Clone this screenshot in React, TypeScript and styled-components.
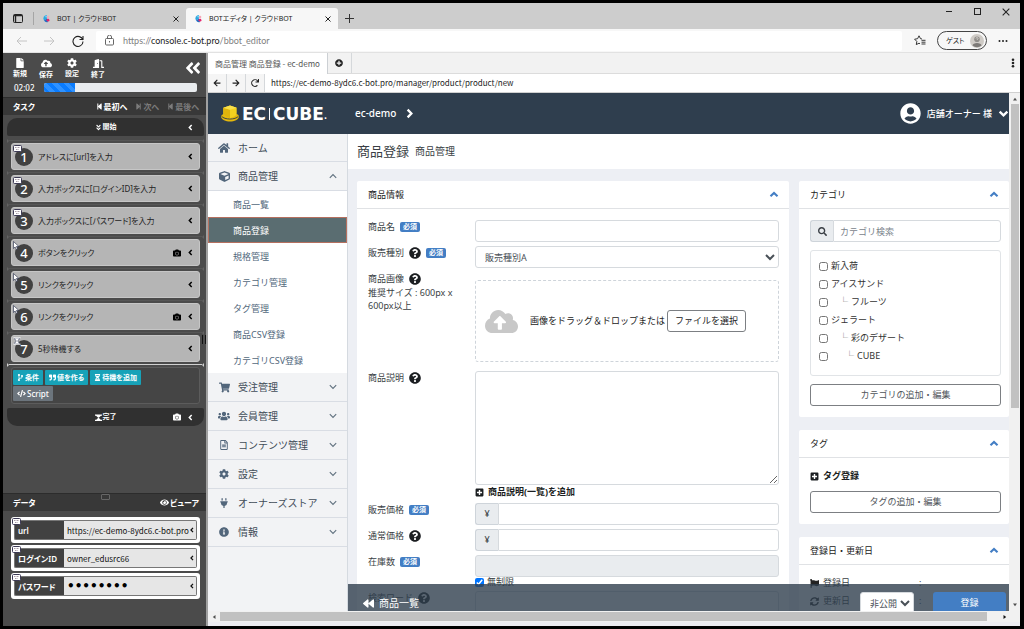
import React from "react";
import styled, { createGlobalStyle, css } from "styled-components";
import {
  FaFile, FaCloudUploadAlt, FaCog, FaDoorOpen, FaAngleDoubleLeft, FaStepBackward, FaStepForward,
  FaCamera, FaCodeBranch, FaQuoteRight,
  FaHourglassHalf, FaCode, FaEye, FaHome, FaCube, FaShoppingCart, FaUsers, FaRegFileAlt, FaPlug,
  FaInfoCircle, FaQuestionCircle, FaPlusSquare, FaBackward, FaFlag, FaSyncAlt, FaSearch,
  FaUserCircle, FaArrowLeft, FaArrowRight, FaRedo, FaPlusCircle, FaAngleDoubleDown,
} from "react-icons/fa";

const Global = createGlobalStyle`
  *, *::before, *::after { box-sizing: border-box; }
  body {
    margin: 0;
    background: #000;
    color: #3a3f45;
    font: 9px/14px "Noto Sans", "Noto Sans CJK JP", sans-serif;
  }
  button, input, select, textarea { font: inherit; color: inherit; margin: 0; padding: 0; }
  button { border: 0; background: none; cursor: pointer; }
  a { color: inherit; text-decoration: none; }
  ul, ol { margin: 0; padding: 0; list-style: none; }
  h1, h2 { margin: 0; font: inherit; }
  svg { display: block; flex: none; }
`;

/* ---------- browser window ---------- */

const Window = styled.div`
  height: 100vh;
  border: 3px solid #000;
  border-right-width: 4px;
  display: flex;
  flex-direction: column;
  overflow: hidden;
`;

const TabStrip = styled.div`
  flex: none;
  display: flex;
  align-items: flex-end;
  height: 26px;
  background: #cdcdcd;
`;

const WindowMenu = styled.button`
  width: 31px;
  height: 13px;
  margin-bottom: 4px;
  display: grid;
  place-items: center;
  border-right: 1px solid #a5a5a5;
  color: #222;
`;

const BrowserTab = styled.div<{ $active?: boolean }>`
  width: 152px;
  height: 21px;
  padding: 0 7px 0 8px;
  display: flex;
  align-items: center;
  gap: 6px;
  border-radius: 3px 3px 0 0;
  background: ${(p) => (p.$active ? "#f7f7f7" : "transparent")};
  color: #222;
  font-size: 7px;
  font-feature-settings: "palt";
  & > span { flex: 1; white-space: nowrap; }
`;

const PlainButton = styled.button`
  display: grid;
  place-items: center;
  color: inherit;
`;

const NewTab = styled(PlainButton)`
  width: 22px;
  height: 21px;
  color: #333;
`;

const WindowControls = styled.div`
  margin-left: auto;
  align-self: flex-start;
  display: flex;
  gap: 19px;
  padding: 3px 10px 0 0;
  color: #222;
`;

const AddressRow = styled.div`
  flex: none;
  display: flex;
  align-items: center;
  height: 24px;
  background: #f7f7f7;
  border-bottom: 1px solid #e2e2e2;
`;

const NavButtons = styled.div`
  display: flex;
  gap: 17px;
  width: 93px;
  padding-left: 13px;
  color: #c4c4c4;
  & > :last-child { color: #222; }
`;

const AddressBox = styled.div`
  flex: 1;
  display: flex;
  align-items: center;
  gap: 9px;
  height: 20px;
  padding-left: 9px;
  background: #fff;
  border-radius: 2px;
  color: #808080;
  font-family: Lato, sans-serif;
  & b { font-weight: 400; color: #222; }
`;

const BrowserTools = styled.div`
  display: flex;
  align-items: center;
  gap: 11px;
  padding: 0 12px;
  color: #222;
`;

const Guest = styled.button`
  display: flex;
  align-items: center;
  justify-content: space-between;
  width: 50px;
  height: 19px;
  padding: 0 2px 0 8px;
  border: 1px solid #444;
  border-radius: 10px;
  font-size: 7px;
  font-feature-settings: "palt";
  white-space: nowrap;
`;

/* ---------- bot editor panel ---------- */

const Workspace = styled.div`
  flex: 1;
  min-height: 0;
  display: flex;
`;

const Editor = styled.aside`
  flex: none;
  position: relative;
  display: flex;
  flex-direction: column;
  width: 205px;
  background: #4b4b4b;
  border-right: 2px solid #a0a0a0;
  color: #fff;
  font-size: 8px;
  line-height: 10px;
  font-feature-settings: "palt";
`;

const EditorTools = styled.div`
  display: flex;
  align-items: flex-start;
  height: 28px;
  padding: 5px 4px 0;
`;

const ToolButton = styled.button`
  width: 26px;
  display: flex;
  flex-direction: column;
  align-items: center;
  gap: 1px;
  font-size: 7px;
  font-weight: 700;
  line-height: 10px;
`;

const Collapse = styled.button`
  margin: 1px 0 0 auto;
`;

const ProgressRow = styled.div`
  display: flex;
  align-items: center;
  gap: 10px;
  height: 16px;
  padding: 0 9px 3px 11px;
  font-weight: 500;
`;

const Progress = styled.div`
  flex: 1;
  height: 9px;
  background: #e9ecef;
  border-radius: 2px;
  overflow: hidden;
`;

const ProgressFill = styled.div`
  height: 100%;
  background: repeating-linear-gradient(45deg, #0a7cff 0 4px, #2f92ff 4px 8px);
`;

const SectionBar = styled.div`
  flex: none;
  position: relative;
  display: flex;
  align-items: center;
  gap: 8px;
  height: 18px;
  padding: 0 7px 0 10px;
  background: #383838;
  border-top: 1px solid #2c2c2c;
  font-weight: 600;
  & > h2 { flex: 1; }
`;

const StepButton = styled.button<{ $dim?: boolean }>`
  display: flex;
  align-items: center;
  gap: 1px;
  font-weight: 700;
  color: ${(p) => (p.$dim ? "#7c7c7c" : "#fff")};
`;

const TaskArea = styled.div`
  flex: 1;
  padding: 3px 2px 0 4px;
`;

const Terminal = styled.div<{ $end?: boolean }>`
  display: grid;
  grid-template-columns: 1fr auto 1fr;
  align-items: center;
  height: 18px;
  padding: 0 10px;
  background: #303030;
  border-radius: ${(p) => (p.$end ? "2px 2px 10px 10px" : "10px 10px 2px 2px")};
  font-size: 7px;
  font-weight: 700;
  & > span { grid-column: 2; display: flex; align-items: center; gap: 1px; }
  & > div { display: flex; justify-content: flex-end; align-items: center; gap: 6px; }
`;

const Connector = styled.div<{ $bright?: boolean; $first?: boolean }>`
  --line: ${(p) => (p.$bright ? "#d0d0d0" : "#626262")};
  height: 5px;
  margin-top: ${(p) => (p.$first ? 2 : 0)}px;
  display: flex;
  align-items: center;
  &::before, &::after {
    content: "";
    border: 2px solid transparent;
  }
  &::before { border-left: 2px solid var(--line); border-right: 0; }
  &::after { border-right: 2px solid var(--line); border-left: 0; }
  & > i { flex: 1; height: 1px; background: ${(p) => (p.$bright ? "#d0d0d0" : "#565656")}; }
`;

const TaskCard = styled.li`
  position: relative;
  display: flex;
  align-items: center;
  height: 27px;
  margin: 0 4px;
  padding: 0 5px 0 3px;
  background: #b5b5b5;
  border: 1px solid #c6c6c6;
  border-radius: 3px;
  color: #222;
  white-space: nowrap;
  & > span { flex: 1; }
  & > div { display: flex; align-items: center; gap: 6px; color: #000; }
`;

const StepNumber = styled.b`
  width: 18px;
  height: 18px;
  margin-right: 5px;
  border-radius: 50%;
  background: #414141;
  color: #fff;
  font-size: 13px;
  font-weight: 500;
  line-height: 18px;
  text-align: center;
`;

const Badge = styled.span`
  position: absolute;
  top: 1px;
  left: 1px;
`;

const ActionBox = styled.div`
  display: flex;
  flex-wrap: wrap;
  gap: 1px 2px;
  height: 37px;
  margin: 0 4px 4px;
  padding: 2px 30px 2px 1px;
  border: 1px solid #5c5c5c;
  border-radius: 3px;
  background: #454545;
`;

const ActionButton = styled.button<{ $plain?: boolean }>`
  display: flex;
  align-items: center;
  gap: 1px;
  height: 15px;
  padding: 0 4px;
  border-radius: 1px;
  background: ${(p) => (p.$plain ? "#6c757d" : "#17a2b8")};
  font-size: ${(p) => (p.$plain ? "8px" : "7px")};
  font-weight: ${(p) => (p.$plain ? 500 : 700)};
`;

const DataList = styled.ul`
  display: flex;
  flex-direction: column;
  gap: 2px;
  height: 115px;
  padding: 6px 6px 0 8px;
`;

const DataRow = styled.li`
  position: relative;
  display: flex;
  height: 26px;
  padding: 3px;
  background: #fff;
  border-radius: 3px;
`;

const DataName = styled.label`
  width: 50px;
  padding: 0 3px;
  background: #414141;
  border: 1px solid #777;
  border-right: 0;
  border-radius: 2px 0 0 2px;
  line-height: 20px;
  font-weight: 600;
  white-space: nowrap;
`;

const DataValue = styled.div`
  flex: 1;
  min-width: 0;
  display: flex;
  align-items: center;
  padding-right: 1px;
  background: #e6e6e6;
  border: 1px solid #777;
  border-left: 0;
  border-radius: 0 2px 2px 0;
  color: #111;
  & > input {
    flex: 1;
    min-width: 0;
    height: 18px;
    padding-left: 3px;
    border: 0;
    outline: 0;
    background: none;
    font-family: "Noto Sans CJK JP", sans-serif;
  }
  & > input[type="password"] { font: 700 12px "DejaVu Sans", sans-serif; color: #000; }
`;

const SideGrip = styled.span`
  position: absolute;
  right: 0;
  top: 282px;
  width: 4px;
  height: 9px;
  border: solid #111;
  border-width: 0 1px;
`;

const TopGrip = styled.span`
  position: absolute;
  top: 0;
  left: 98px;
  width: 9px;
  height: 6px;
  border: 1px solid #666;
  border-radius: 1px;
`;

/* ---------- embedded page ---------- */

const Viewer = styled.section`
  flex: 1;
  min-width: 0;
  display: flex;
  flex-direction: column;
  background: #fff;
`;

const ViewerTabs = styled.div`
  flex: none;
  display: flex;
  height: 21px;
  background: #f2f2f2;
  border-bottom: 1px solid #dcdcdc;
  font-family: "Noto Sans CJK JP", sans-serif;
  font-size: 8px;
`;

const ViewerTab = styled.div`
  height: 21px;
  padding: 0 7px;
  background: #fff;
  border-right: 1px solid #ccd0d4;
  line-height: 22px;
  color: #555;
  white-space: nowrap;
`;

const ViewerAdd = styled(PlainButton)`
  width: 24px;
  border-right: 1px solid #d5d8db;
  color: #222;
`;

const ViewerMenu = styled(PlainButton)`
  width: 14px;
  margin-left: auto;
  color: #222;
`;

const ViewerAddress = styled.div`
  flex: none;
  display: flex;
  height: 19px;
  border-bottom: 1px solid #d0d0d0;
  color: #222;
  font-family: "Noto Sans CJK JP", sans-serif;
  font-size: 8px;
  line-height: 18px;
  & > button { width: 19px; border-right: 1px solid #d5d8db; background: #f5f5f5; color: #222; }
  & > span { padding-left: 6px; }
`;

const Frame = styled.div`
  flex: 1;
  min-height: 0;
  display: grid;
  grid-template-columns: minmax(0, 1fr) 11px;
  grid-template-rows: minmax(0, 1fr) 11px;
  border-bottom: 4px solid #ededf2;
`;

const Page = styled.div`
  display: flex;
  flex-direction: column;
  min-height: 0;
  overflow: hidden;
`;

const VerticalBar = styled.div`
  display: flex;
  flex-direction: column;
  align-items: center;
  justify-content: space-between;
  padding: 4px 1px;
  background: #f1f1f1;
  color: #505050;
  & > i { flex: 1; width: 8px; margin-top: 3px; background: linear-gradient(#c1c1c1 61%, transparent 61%); }
`;

const HorizontalBar = styled.div`
  grid-column: 1 / -1;
  display: flex;
  align-items: center;
  padding: 0 13px 0 4px;
  background: #f1f1f1;
  color: #505050;
  & > i { flex: 1; height: 9px; margin: 0 16px 0 4px; background: #c1c1c1; }
`;

const PageHeader = styled.header`
  flex: none;
  display: flex;
  align-items: center;
  height: 41px;
  padding-left: 12px;
  background: #2f3e4e;
  color: #fff;
  font-size: 10px;
`;

const Logo = styled.a`
  display: flex;
  align-items: center;
  width: 135px;
  font: 700 17px/20px "DejaVu Sans", sans-serif;
  & > svg { margin-right: 2px; }
  & > i { width: 1px; height: 12px; margin: 0 3px; background: #fff; }
  & > small { font-size: 8px; align-self: flex-end; line-height: 14px; }
`;

const ShopLink = styled.a`
  display: flex;
  align-items: center;
  gap: 8px;
  padding-bottom: 1px;
  font-weight: 500;
`;

const UserMenu = styled.button`
  display: flex;
  align-items: center;
  gap: 6px;
  margin-left: auto;
  font-size: 9px;
  font-weight: 500;
`;

const PageBody = styled.div`
  flex: 1;
  min-height: 0;
  display: flex;
`;

const SideNav = styled.nav`
  flex: none;
  width: 140px;
  background: #f2f3f5;
  border-right: 1px solid #d5dae0;
`;

const NavItem = styled.a`
  display: grid;
  grid-template-columns: 12px 1fr 8px;
  align-items: center;
  gap: 8px;
  height: 29px;
  padding: 0 10px;
  border-bottom: 1px solid #d9dde4;
  color: #414c58;
  font-size: 10px;
  &:first-child { height: 28px; }
  & > svg:first-child { color: #52667b; justify-self: center; }
  & > svg:last-child { color: #60717f; }
`;

const SubItem = styled.a<{ $active?: boolean }>`
  display: block;
  height: 26px;
  padding-left: 24px;
  border: 1px solid transparent;
  background: #fff;
  color: #52687c;
  line-height: 25px;
  ${(p) => p.$active && css`
    background: #5a6d71;
    border-color: #b5705f;
    color: #fff;
  `}
`;

const Content = styled.main`
  flex: 1;
  min-width: 0;
  position: relative;
  overflow: hidden;
  background: #edeff4;
`;

const TitleBar = styled.div`
  display: flex;
  align-items: center;
  gap: 6px;
  height: 35px;
  padding: 0 0 2px 9px;
  background: #fff;
  font-size: 10px;
  & > h1 { font-size: 13px; }
`;

const Columns = styled.div`
  display: grid;
  grid-template-columns: minmax(0, 1fr) 210px;
  gap: 10px;
  align-items: start;
  padding: 12px 0 0 9px;
`;

const SideColumn = styled.div`
  display: flex;
  flex-direction: column;
  gap: 13px;
`;

const CardBox = styled.section`
  background: #fff;
  border-radius: 2px;
`;

const CardHead = styled.div`
  display: flex;
  align-items: center;
  justify-content: space-between;
  height: 28px;
  padding: 0 8px 0 11px;
  border-bottom: 1px solid #e0e2e5;
  color: #222;
  & > button { padding: 0 2px; color: #437ec4; }
`;

const CardBody = styled.div<{ $gap: number }>`
  display: flex;
  flex-direction: column;
  gap: ${(p) => p.$gap}px;
  padding: 11px 10px 11px 11px;
`;

const SideBody = styled(CardBody)`
  padding-right: 8px;
`;

const FieldRow = styled.div`
  display: grid;
  grid-template-columns: 107px minmax(0, 1fr);
`;

const FieldLabel = styled.label`
  display: flex;
  flex-wrap: wrap;
  align-items: center;
  align-self: start;
  gap: 0 5px;
  white-space: nowrap;
`;

const FieldNote = styled.span`
  width: 100%;
  white-space: pre-line;
  line-height: 13px;
`;

const Required = styled.span`
  height: 10px;
  padding: 0 3px;
  border-radius: 2px;
  background: #437ec4;
  color: #fff;
  font-size: 7px;
  font-weight: 700;
  line-height: 10px;
`;

const box = css`
  border: 1px solid #d6dade;
  border-radius: 3px;
  background: #fff;
`;

const TextInput = styled.input`
  ${box}
  width: 100%;
  height: 22px;
  padding: 0 6px;
  &:disabled { background: #e9ecef; }
  &::placeholder { color: #7a838b; opacity: 1; }
`;

const SelectInput = styled.select`
  ${box}
  width: 100%;
  height: 22px;
  padding: 0 0 0 5px;
  color: #495057;
`;

const TextArea = styled.textarea`
  ${box}
  display: block;
  width: 100%;
  height: 114px;
  resize: vertical;
`;

const DropZone = styled.div`
  display: flex;
  align-items: center;
  height: 82px;
  margin: 8px 0 5px;
  padding-left: 9px;
  border: 1px dashed #ced4da;
  border-radius: 3px;
  color: #222;
  white-space: nowrap;
  & > svg { color: #c8c8c8; margin-right: 12px; }
`;

const OutlineButton = styled.button`
  height: 22px;
  padding: 0 7px;
  border: 1px solid #7c7f83;
  border-radius: 3px;
  background: #fff;
  color: #50555a;
`;

const FileButton = styled(OutlineButton)`
  margin-left: 2px;
  color: #222;
`;

const AddLink = styled.a`
  display: flex;
  align-items: center;
  gap: 4px;
  color: #1b1e21;
  font-weight: 700;
`;

const InputGroup = styled.div`
  display: flex;
  & > input { border-radius: 0 3px 3px 0; min-width: 0; }
`;

const Addon = styled.span`
  flex: none;
  display: grid;
  place-items: center;
  width: 23px;
  border: 1px solid #ced4da;
  border-right: 0;
  border-radius: 3px 0 0 3px;
  background: #e9ecef;
`;

const Tick = styled.input`
  width: 9px;
  height: 9px;
`;

const CheckLabel = styled.label<{ $short?: boolean }>`
  display: flex;
  align-items: center;
  gap: 3px;
  height: ${(p) => (p.$short ? "10px" : "18px")};
  white-space: pre;
`;

const Tree = styled.div`
  height: 126px;
  padding: 6px 8px;
  border: 1px solid #e1e4e7;
  border-radius: 3px;
  color: #333;
`;

const Branch = styled.span<{ $depth: number }>`
  display: inline-flex;
  align-items: center;
  gap: 3px;
  padding-left: ${(p) => p.$depth * 6 + 2}px;
  & > i { color: #777; font-style: normal; }
`;

const DateRow = styled.div`
  display: grid;
  grid-template-columns: 9px 92px 1fr;
  align-items: center;
  gap: 4px;
`;

const ActionBar = styled.div`
  position: absolute;
  left: 0;
  right: 0;
  bottom: 0;
  display: flex;
  align-items: flex-start;
  height: 27px;
  padding: 8px 3px 0 15px;
  overflow: hidden;
  background: rgba(47, 62, 78, 0.8);
  color: #fff;
  font-size: 10px;
`;

const BackLink = styled.a`
  flex: 1;
  display: flex;
  align-items: center;
  gap: 5px;
  height: 22px;
`;

const StatusSelect = styled(SelectInput)`
  width: 54px;
  font-size: 9px;
  margin-right: 19px;
`;

const SubmitButton = styled.button`
  width: 73px;
  height: 22px;
  border-radius: 3px 3px 0 0;
  background: #437ec4;
  font-size: 9px;
`;

/* ---------- drawings ---------- */

type Kind = "keyboard" | "pointer" | "wait";

const KindMark = ({ kind }: { kind: Kind }) => {
  if (kind === "keyboard")
    return (
      <svg width="9" height="7" viewBox="0 0 9 7">
        <rect x=".5" y=".5" width="8" height="6" rx="1" fill="#fff" stroke="#3d3a55" />
        <path d="M2 2.500h5M3 4.500h3" stroke="#a79aa5" strokeDasharray="1 .5" />
      </svg>
    );
  if (kind === "pointer")
    return (
      <svg width="7" height="9" viewBox="0 0 7 9">
        <path d="M.5.5v7l1.600-1.500 1.200 2.500 1.300-.6-1.200-2.400h2.500z" fill="#fff" stroke="#1b2340" strokeWidth=".6" />
      </svg>
    );
  return (
    <svg width="8" height="8" viewBox="0 0 8 8">
      <path d="M1.500 1h5c0 2-1.800 2-1.800 3s1.800 1 1.800 3h-5c0-2 1.800-2 1.800-3S1.500 3 1.500 1z" fill="#fff" stroke="#283355" strokeWidth=".6" />
      <path d="M.5.800h7M.5 7.200h7" stroke="#fff" />
    </svg>
  );
};

const Favicon = () => (
  <svg width="9" height="9" viewBox="0 0 9 9">
    <path d="M5 1A3.500 3.500 0 0 0 2 6.500L5 4.500z" fill="#2aa7e0" />
    <path d="M2 6.500A3.500 3.500 0 0 0 6 8L5 4.500z" fill="#1d6fc4" />
    <circle cx="6" cy="3" r="1.300" fill="#f5a9b8" />
    <circle cx="6" cy="6.200" r="1.400" fill="#e5246d" />
    <circle cx="4.200" cy="2.400" r="1" fill="#7fd0ef" />
  </svg>
);

const Cross = ({ size = 6, width = 1 }) => (
  <svg width={size} height={size} viewBox="0 0 6 6" stroke="currentColor" strokeWidth={width}>
    <path d="M.5.5l5 5M5.500.5l-5 5" />
  </svg>
);

const ThinArrow = ({ flip }: { flip?: boolean }) => (
  <svg width="11" height="10" viewBox="0 0 11 10" fill="none" stroke="currentColor">
    <path d={flip ? "M0 5h10M6 1l4 4-4 4" : "M11 5H1M5 1L1 5l4 4"} />
  </svg>
);

const Angle = ({ up }: { up?: boolean }) => (
  <svg width="8" height="6" viewBox="0 0 8 6" fill="none" stroke="currentColor" strokeWidth="1.100">
    <path d={up ? "M.8 4.800L4 1.500l3.200 3.300" : "M.8 1.200L4 4.500l3.200-3.300"} />
  </svg>
);

const chevrons = {
  up: "M1.500 6.200L5 2.900l3.500 3.300",
  down: "M1.500 3.300L5 6.700l3.500-3.400",
  left: "M6.700 1.500L3.300 5l3.400 3.500",
  right: "M3.300 1.500L6.700 5 3.300 8.500",
};

const Chevron = ({ to, size = 10 }: { to: keyof typeof chevrons; size?: number }) => (
  <svg width={size} height={size} viewBox="0 0 10 10" fill="none" stroke="currentColor" strokeWidth="2.100">
    <path d={chevrons[to]} />
  </svg>
);

const FinishMark = () => (
  <svg width="7" height="7" viewBox="0 0 7 7" fill="currentColor">
    <path d="M0 .5h7v1.300H0zM1 1.800h5L3.500 4zM3.500 3.600L6 6H1zM0 5.700h7V7H0z" />
  </svg>
);

const ArrowHead = ({ d }: { d: string }) => (
  <svg width="6" height="4" viewBox="0 0 6 4"><path d={d} fill="currentColor" /></svg>
);

const Hat = () => (
  <svg width="20" height="17" viewBox="0 0 20 17">
    <path d="M1 11.500c0-1.500 2-2.500 3-2.500h12c1.500 0 3 1 3 2.500 0 3-5 5-9 5s-9-2-9-5z" fill="#e5b80b" />
    <path d="M1.500 11.200c3 3.800 14 3.800 17 0" fill="none" stroke="#2f3e4e" strokeWidth=".9" />
    <path d="M3.300 2.800L10 .5l6.700 2.300v5.400c0 2.500-3 3.600-6.700 5-3.700-1.400-6.700-2.500-6.700-5z" fill="#f4d21f" />
    <path d="M3.300 2.800L10 4.800v8.400c-3.700-1.400-6.700-2.500-6.700-5z" fill="#e0b40c" />
    <path d="M3.300 2.800L10 .5l6.700 2.300L10 4.800z" fill="#f9e04a" />
  </svg>
);

/* ---------- data ---------- */

const tasks: { text: string; kind: Kind; shot?: boolean }[] = [
  { text: "アドレスに[url]を入力", kind: "keyboard" },
  { text: "入力ボックスに[ログインID]を入力", kind: "keyboard" },
  { text: "入力ボックスに[パスワード]を入力", kind: "keyboard" },
  { text: "ボタンをクリック", kind: "pointer", shot: true },
  { text: "リンクをクリック", kind: "pointer" },
  { text: "リンクをクリック", kind: "pointer", shot: true },
  { text: "5秒待機する", kind: "wait" },
];

const values = [
  { name: "url", value: "https://ec-demo-8ydc6.c-bot.pro", type: "text" },
  { name: "ログインID", value: "owner_edusrc66", type: "text" },
  { name: "パスワード", value: "password", type: "password" },
];

const products = ["商品一覧", "商品登録", "規格管理", "カテゴリ管理", "タグ管理", "商品CSV登録", "カテゴリCSV登録"];

const sections = [
  { text: "受注管理", icon: <FaShoppingCart size={11} /> },
  { text: "会員管理", icon: <FaUsers size={12} /> },
  { text: "コンテンツ管理", icon: <FaRegFileAlt size={10} /> },
  { text: "設定", icon: <FaCog size={10} /> },
  { text: "オーナーズストア", icon: <FaPlug size={10} /> },
  { text: "情報", icon: <FaInfoCircle size={10} /> },
];

const categories = [
  { text: "新入荷", depth: 0 },
  { text: "アイスサンド", depth: 0 },
  { text: "フルーツ", depth: 1 },
  { text: "ジェラート", depth: 0 },
  { text: "彩のデザート", depth: 1 },
  { text: "CUBE", depth: 2 },
];

/* ---------- parts ---------- */

const Card = ({ title, children }: { title: string; children: React.ReactNode }) => (
  <CardBox>
    <CardHead>
      <h2>{title}</h2>
      <button aria-label={`${title}を閉じる`}><Chevron to="up" /></button>
    </CardHead>
    {children}
  </CardBox>
);

type FieldProps = { id: string; label: string; help?: boolean; required?: boolean; note?: string; children: React.ReactNode };

const Field = ({ id, label, help, required, note, children }: FieldProps) => (
  <FieldRow>
    <FieldLabel htmlFor={id}>
      {label}
      {help && <FaQuestionCircle size={12} color="#1b1e21" />}
      {required && <Required>必須</Required>}
      {note && <FieldNote>{note}</FieldNote>}
    </FieldLabel>
    <div>{children}</div>
  </FieldRow>
);

const BotEditor = () => (
  <Editor>
    <EditorTools>
      <ToolButton><FaFile size={10} />新規</ToolButton>
      <ToolButton><FaCloudUploadAlt size={11} />保存</ToolButton>
      <ToolButton><FaCog size={10} />設定</ToolButton>
      <ToolButton><FaDoorOpen size={11} />終了</ToolButton>
      <Collapse aria-label="折りたたむ"><FaAngleDoubleLeft size={18} /></Collapse>
    </EditorTools>
    <ProgressRow>
      02:02
      <Progress><ProgressFill style={{ width: "20%" }} /></Progress>
    </ProgressRow>
    <SectionBar>
      <h2>タスク</h2>
      <StepButton><FaStepBackward size={7} />最初へ</StepButton>
      <StepButton $dim><FaStepForward size={7} />次へ</StepButton>
      <StepButton $dim><FaStepBackward size={7} />最後へ</StepButton>
    </SectionBar>
    <TaskArea>
      <Terminal>
        <span><FaAngleDoubleDown size={7} />開始</span>
        <div><Chevron to="left" size={7} /></div>
      </Terminal>
      <Connector $first><i /></Connector>
      <ol>
        {tasks.map((task, i) => (
          <React.Fragment key={i}>
            {i > 0 && <Connector as="li" aria-hidden><i /></Connector>}
            <TaskCard>
              <StepNumber>{i + 1}</StepNumber>
              <span>{task.text}</span>
              <div>{task.shot && <FaCamera size={8} />}<Chevron to="left" size={7} /></div>
              <Badge><KindMark kind={task.kind} /></Badge>
            </TaskCard>
          </React.Fragment>
        ))}
      </ol>
      <Connector $bright><i /></Connector>
      <ActionBox>
        <ActionButton><FaCodeBranch size={7} />条件</ActionButton>
        <ActionButton><FaQuoteRight size={7} />値を作る</ActionButton>
        <ActionButton><FaHourglassHalf size={7} />待機を追加</ActionButton>
        <ActionButton $plain><FaCode size={9} />Script</ActionButton>
      </ActionBox>
      <Terminal $end>
        <span><FinishMark />完了</span>
        <div><FaCamera size={8} /><Chevron to="left" size={7} /></div>
      </Terminal>
    </TaskArea>
    <SectionBar>
      <h2>データ</h2>
      <TopGrip />
      <StepButton><FaEye size={9} />ビューア</StepButton>
    </SectionBar>
    <DataList>
      {values.map((v, i) => (
        <DataRow key={v.name}>
          <DataName htmlFor={`value-${i}`}>{v.name}</DataName>
          <DataValue>
            <input id={`value-${i}`} type={v.type} defaultValue={v.value} />
            <Chevron to="left" size={6} />
          </DataValue>
          <Badge><KindMark kind="keyboard" /></Badge>
        </DataRow>
      ))}
    </DataList>
    <SideGrip />
  </Editor>
);

const ProductPage = () => (
  <Page>
    <PageHeader>
      <Logo href="#"><Hat />EC<i />CUBE<small>.</small></Logo>
      <ShopLink href="#">ec-demo<Chevron to="right" size={11} /></ShopLink>
      <UserMenu><FaUserCircle size={21} />店舗オーナー 様<Chevron to="down" size={11} /></UserMenu>
    </PageHeader>
    <PageBody>
      <SideNav>
        <NavItem href="#"><FaHome size={12} />ホーム<span /></NavItem>
        <NavItem href="#"><FaCube size={11} />商品管理<Angle up /></NavItem>
        {products.map((p, i) => <SubItem key={p} href="#" $active={i === 1}>{p}</SubItem>)}
        {sections.map((s) => <NavItem key={s.text} href="#">{s.icon}{s.text}<Angle /></NavItem>)}
      </SideNav>
      <Content>
        <TitleBar><h1>商品登録</h1>商品管理</TitleBar>
        <Columns>
          <Card title="商品情報">
            <CardBody $gap={4}>
              <Field id="name" label="商品名" required><TextInput id="name" /></Field>
              <Field id="kind" label="販売種別" help required>
                <SelectInput id="kind"><option>販売種別A</option></SelectInput>
              </Field>
              <Field id="image" label="商品画像" help note={"推奨サイズ : 600px x\n600px以上"}>
                <DropZone>
                  <FaCloudUploadAlt size={33} />
                  画像をドラッグ＆ドロップまたは
                  <FileButton id="image">ファイルを選択</FileButton>
                </DropZone>
              </Field>
              <Field id="detail" label="商品説明" help>
                <TextArea id="detail" />
                <AddLink href="#"><FaPlusSquare size={9} />商品説明(一覧)を追加</AddLink>
              </Field>
              <Field id="price" label="販売価格" required>
                <InputGroup><Addon>¥</Addon><TextInput id="price" /></InputGroup>
              </Field>
              <Field id="normal" label="通常価格" help>
                <InputGroup><Addon>¥</Addon><TextInput id="normal" /></InputGroup>
              </Field>
              <Field id="stock" label="在庫数" required>
                <TextInput id="stock" disabled />
                <CheckLabel $short><Tick type="checkbox" defaultChecked />無制限</CheckLabel>
              </Field>
              <Field id="word" label="検索ワード" help><TextInput id="word" /></Field>
            </CardBody>
          </Card>
          <SideColumn>
            <Card title="カテゴリ">
              <SideBody $gap={8}>
                <InputGroup>
                  <Addon><FaSearch size={9} /></Addon>
                  <TextInput aria-label="カテゴリ検索" placeholder="カテゴリ検索" />
                </InputGroup>
                <Tree>
                  {categories.map((c) => (
                    <CheckLabel key={c.text}>
                      <Tick type="checkbox" />
                      {c.depth ? <Branch $depth={c.depth}><i>└</i>{c.text}</Branch> : c.text}
                    </CheckLabel>
                  ))}
                </Tree>
                <OutlineButton>カテゴリの追加・編集</OutlineButton>
              </SideBody>
            </Card>
            <Card title="タグ">
              <SideBody $gap={8}>
                <AddLink href="#"><FaPlusSquare size={9} />タグ登録</AddLink>
                <OutlineButton>タグの追加・編集</OutlineButton>
              </SideBody>
            </Card>
            <Card title="登録日・更新日">
              <SideBody $gap={4}>
                <DateRow><FaFlag size={9} color="#222" />登録日<span>:</span></DateRow>
                <DateRow><FaSyncAlt size={9} color="#222" />更新日<span>:</span></DateRow>
              </SideBody>
            </Card>
          </SideColumn>
        </Columns>
        <ActionBar>
          <BackLink href="#"><FaBackward size={11} />商品一覧</BackLink>
          <StatusSelect aria-label="公開状態"><option>非公開</option></StatusSelect>
          <SubmitButton>登録</SubmitButton>
        </ActionBar>
      </Content>
    </PageBody>
  </Page>
);

export default function App() {
  return (
    <>
      <Global />
      <Window>
        <TabStrip>
          <WindowMenu aria-label="タブ操作">
            <svg width="10" height="9" viewBox="0 0 10 9" fill="none" stroke="currentColor">
              <rect x=".5" y=".5" width="9" height="8" rx="1" />
              <path d="M1 1.500h8M2.500 1v7" strokeWidth="1.400" />
            </svg>
          </WindowMenu>
          <BrowserTab>
            <Favicon /><span>BOT | クラウドBOT</span>
            <PlainButton aria-label="閉じる"><Cross /></PlainButton>
          </BrowserTab>
          <BrowserTab $active>
            <Favicon /><span>BOTエディタ | クラウドBOT</span>
            <PlainButton aria-label="閉じる"><Cross /></PlainButton>
          </BrowserTab>
          <NewTab aria-label="新しいタブ">
            <svg width="9" height="9" viewBox="0 0 9 9" stroke="currentColor"><path d="M4.500 0v9M0 4.500h9" /></svg>
          </NewTab>
          <WindowControls>
            <PlainButton aria-label="最小化"><svg width="8" height="11" viewBox="0 0 8 11" stroke="currentColor"><path d="M1 5.500h6" /></svg></PlainButton>
            <PlainButton aria-label="最大化"><svg width="11" height="11" viewBox="0 0 11 11" fill="none" stroke="currentColor"><rect x="2.500" y="2.500" width="6" height="6" /></svg></PlainButton>
            <PlainButton aria-label="閉じる"><Cross size={8} width={0.8} /></PlainButton>
          </WindowControls>
        </TabStrip>
        <AddressRow>
          <NavButtons>
            <PlainButton aria-label="戻る"><ThinArrow /></PlainButton>
            <PlainButton aria-label="進む"><ThinArrow flip /></PlainButton>
            <PlainButton aria-label="更新">
              <svg width="12" height="12" viewBox="0 0 12 12" fill="none" stroke="currentColor" strokeWidth="1.100">
                <path d="M10.800 5A5 5 0 1 0 11 6.500M11 1v3.500H7.500" />
              </svg>
            </PlainButton>
          </NavButtons>
          <AddressBox>
            <svg width="9" height="11" viewBox="0 0 9 11" fill="none" stroke="#666">
              <rect x=".5" y="3.500" width="8" height="6.500" rx="1" /><path d="M2.500 3.500V2a2 2 0 0 1 4 0v1.500M4.500 6v1.500" />
            </svg>
            <span>https://<b>console.c-bot.pro</b>/bbot_editor</span>
          </AddressBox>
          <BrowserTools>
            <PlainButton aria-label="お気に入り">
              <svg width="12" height="11" viewBox="0 0 12 11" fill="none" stroke="currentColor" strokeWidth=".9">
                <path d="M8 4L6.500 3.700 5 .8 3.600 3.700.6 4.200l2.200 2.200-.5 3.200L5 8.200l1 .5M7.500 5.300h4M7.500 7.200h4M7.500 9h4" />
              </svg>
            </PlainButton>
            <Guest>
              ゲスト
              <svg width="14" height="14" viewBox="0 0 14 14">
                <circle cx="7" cy="7" r="7" fill="#cfcbc6" />
                <circle cx="7" cy="5.200" r="2.800" fill="#908d89" />
                <path d="M2.500 11.500c0-3.500 9-3.500 9 0a6.500 6.500 0 0 1-9 0z" fill="#7d7a77" />
                <path d="M6 4.500c0-1.300 2-1.300 2 0 0 .7-1 .8-1 1.500" fill="none" stroke="#e8e5e1" strokeWidth=".7" />
              </svg>
            </Guest>
            <PlainButton aria-label="メニュー">
              <svg width="10" height="4" viewBox="0 0 10 4" fill="currentColor"><circle cx="1.500" cy="2" r="1" /><circle cx="5" cy="2" r="1" /><circle cx="8.500" cy="2" r="1" /></svg>
            </PlainButton>
          </BrowserTools>
        </AddressRow>
        <Workspace>
          <BotEditor />
          <Viewer>
            <ViewerTabs>
              <ViewerTab>商品管理 商品登録 - ec-demo</ViewerTab>
              <ViewerAdd aria-label="タブを追加"><FaPlusCircle size={8} /></ViewerAdd>
              <ViewerMenu aria-label="メニュー">
                <svg width="4" height="10" viewBox="0 0 4 10" fill="currentColor"><circle cx="2" cy="1.700" r="1.300" /><circle cx="2" cy="5" r="1.300" /><circle cx="2" cy="8.300" r="1.300" /></svg>
              </ViewerMenu>
            </ViewerTabs>
            <ViewerAddress>
              <PlainButton aria-label="戻る"><FaArrowLeft size={8} /></PlainButton>
              <PlainButton aria-label="進む"><FaArrowRight size={8} /></PlainButton>
              <PlainButton aria-label="更新"><FaRedo size={8} /></PlainButton>
              <span>https://ec-demo-8ydc6.c-bot.pro/manager/product/product/new</span>
            </ViewerAddress>
            <Frame>
              <ProductPage />
              <VerticalBar>
                <ArrowHead d="M1 3.500L3 .8l2 2.700z" />
                <i />
                <ArrowHead d="M1 .5h4L3 3.200z" />
              </VerticalBar>
              <HorizontalBar>
                <svg width="4" height="6" viewBox="0 0 4 6"><path d="M3.500 1v4L.8 3z" fill="currentColor" /></svg>
                <i />
                <svg width="4" height="6" viewBox="0 0 4 6"><path d="M.5 1v4L3.200 3z" fill="#111" /></svg>
              </HorizontalBar>
            </Frame>
          </Viewer>
        </Workspace>
      </Window>
    </>
  );
}
